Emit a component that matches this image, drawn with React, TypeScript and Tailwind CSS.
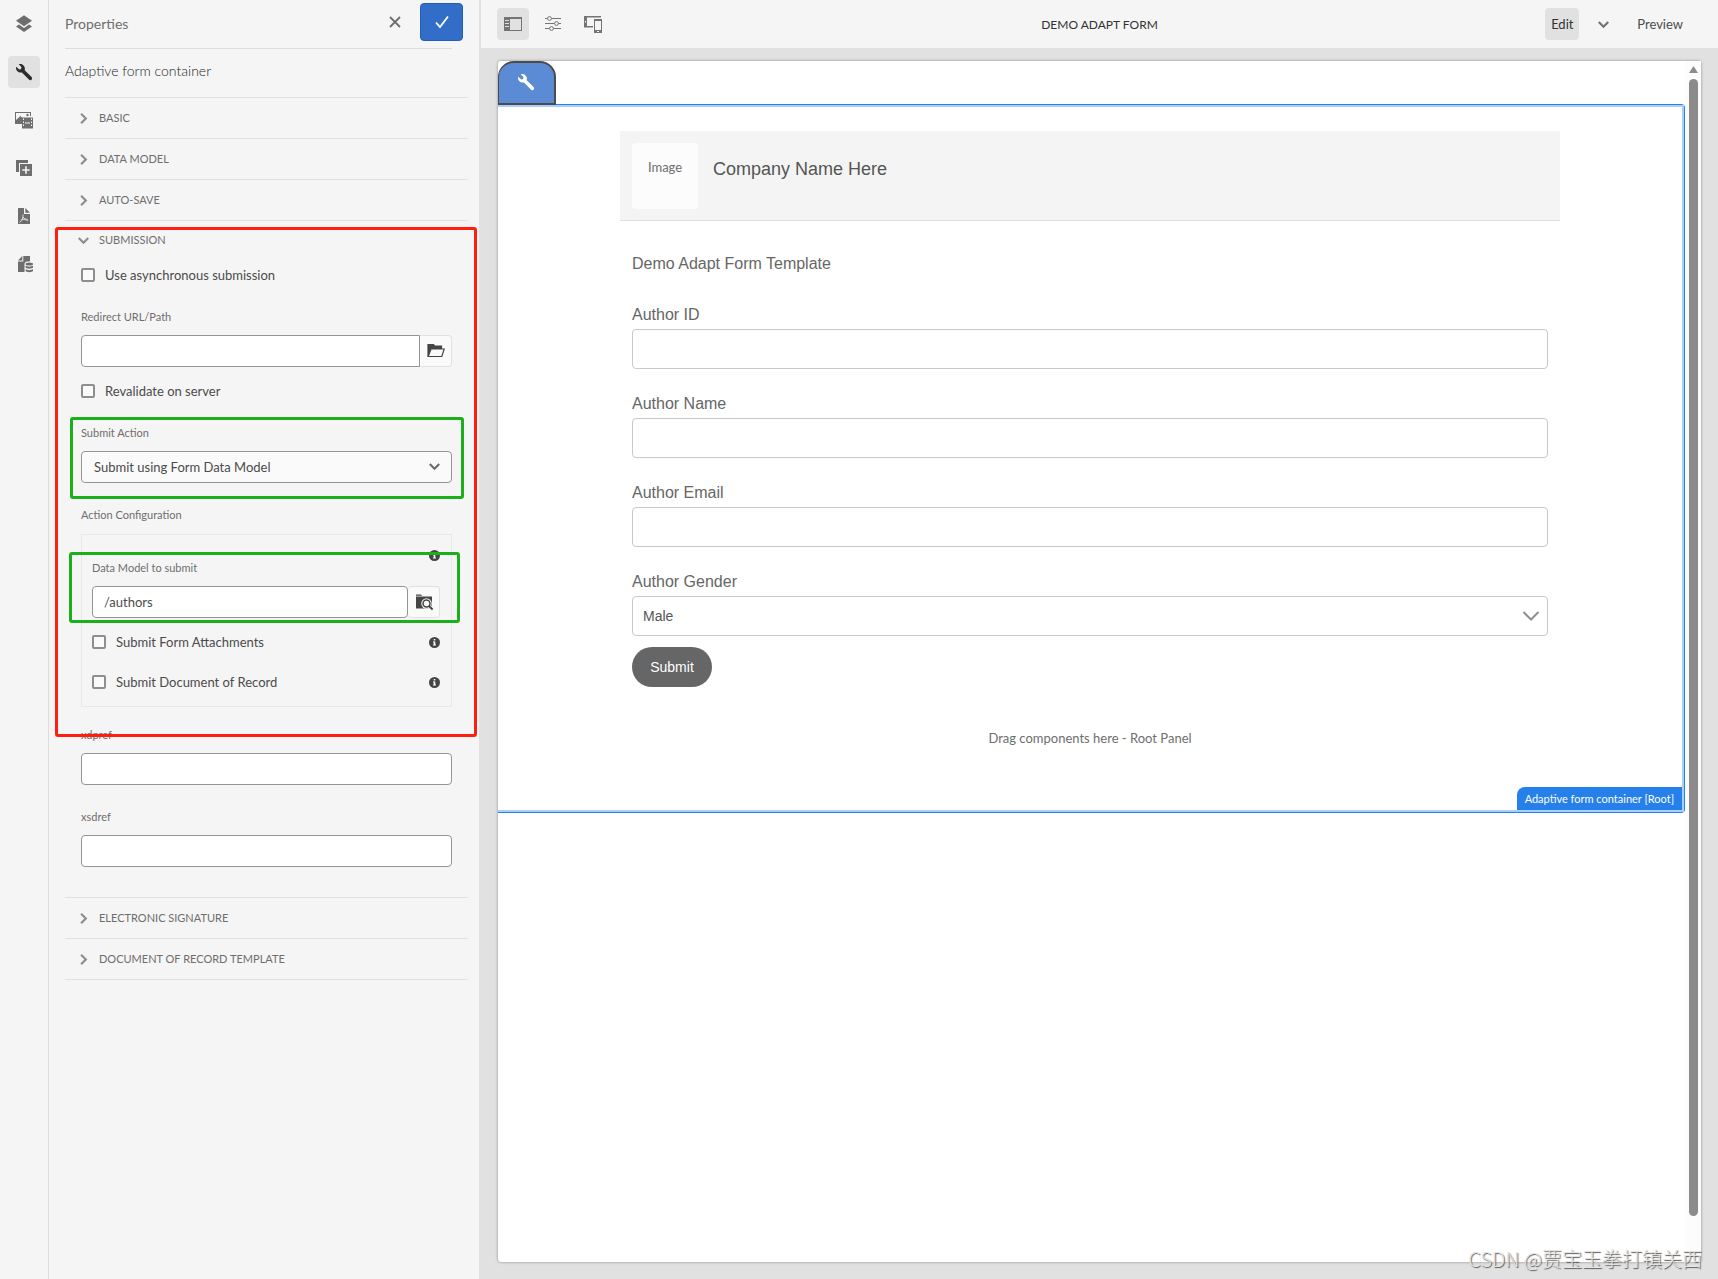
import { useState } from 'react'
import type { ReactNode } from 'react'

const annotation = 'pointer-events-none absolute z-10 rounded-[3px] border-3'
const panelInput = 'h-8 w-full rounded border border-[#959595] bg-white px-[11px] text-[13px] text-[#4b4b4b] outline-none'
const formInput = 'mt-0.5 block h-10 w-full rounded border border-[#c8c8c8] bg-white px-2.5 text-[14px] text-[#555] outline-none'

function Chevron({ className }: { className: string }) {
  return (
    <svg className={className} viewBox="0 0 10 10" fill="none" stroke="currentColor" strokeWidth="2">
      <path d="M.7 2.8 5 7.1l4.3-4.3" />
    </svg>
  )
}

function WrenchIcon() {
  return (
    <svg className="size-[18px]" viewBox="0 0 18 18" fill="currentColor">
      <path d="M16.6 14 9.7 7.3c.5-1.9.1-3.6-1.2-4.9C7.2 1.100 5.300.7 3.700 1.200l2.500 2.500c.3.3.3.7.2 1.100l-.3 1c-.1.2-.2.3-.4.4l-1 .2c-.4.1-.7 0-1-.3L1.200 3.700C.7 5.300 1.200 7 2.400 8.200c1.200 1.200 2.900 1.600 4.500 1.200l7 7.200c.7.8 1.900.9 2.600.1.800-.700.800-1.900.1-2.700z" />
    </svg>
  )
}

function LayersIcon() {
  return (
    <svg className="size-[18px]" viewBox="0 0 18 18" fill="currentColor">
      <path d="M9 .3 17 5.700 9 11.200 1 5.700z" />
      <path d="m4 9.500-3 2 8 5.600 8-5.600-3-2-5 3.400z" />
    </svg>
  )
}

function AssetsIcon() {
  return (
    <svg className="size-[18px]" viewBox="0 0 18 18" fill="currentColor">
      <path d="M0 1h16v4h-1V2H1v7l4.500-4L7 6.500V13H0z" />
      <circle cx="12.500" cy="4" r="1.200" />
      <path
        fillRule="evenodd"
        d="M7 6.500h11v11H7zm1 1v1.500h1V7.500zm0 3v1.500h1v-1.500zm0 3V15h1v-1.500zM16 7.500v1.500h1V7.500zm0 3v1.500h1v-1.500zm0 3V15h1v-1.500zM10 11.500v1h5v-1z"
      />
    </svg>
  )
}

function ComponentsIcon() {
  return (
    <svg className="size-[18px]" viewBox="0 0 18 18" fill="currentColor">
      <path d="M1 1h12v3H4v9H1z" />
      <path fillRule="evenodd" d="M5 5h12v12H5zm5.200 2.300v2.900H7.300v1.600h2.900v2.900h1.600v-2.900h2.900v-1.600h-2.900V7.300z" />
    </svg>
  )
}

function PdfIcon() {
  return (
    <svg className="size-[18px]" viewBox="0 0 18 18" fill="currentColor">
      <path d="M3 1h6v6h6v10H3z" />
      <path d="M10.300 1v4.700H15z" />
      <path
        d="M8 7.500c.4 3-1 6-3.500 8M8.200 10c.7 2 2.300 3.300 5 3.300M6 13.300c1.800-1.100 4-1.500 6.500-1"
        fill="none"
        stroke="#f5f5f5"
        strokeWidth=".8"
      />
    </svg>
  )
}

function DataIcon() {
  return (
    <svg className="size-[18px]" viewBox="0 0 18 18" fill="currentColor">
      <path d="M8.300 1H15v5.300c-3.200 0-5.500.8-5.500 2.500V17H3V6.500h5.300z" />
      <path d="M7.300 1v4.500H3z" />
      <ellipse cx="14.300" cy="9" rx="3.700" ry="1.500" />
      <path d="M10.600 10.800c1.600 1.100 5.800 1.100 7.400 0v1.800c-1 1.400-6.400 1.400-7.400 0zM10.600 14.300c1.600 1.100 5.800 1.100 7.400 0v1.700c-1 1.500-6.400 1.500-7.400 0z" />
    </svg>
  )
}

function SidePanelIcon() {
  return (
    <svg className="h-[14px] w-[18px]" viewBox="0 0 18 14" fill="currentColor">
      <path fillRule="evenodd" d="M0 0h18v14H0zm6 2v11h11V2zM1 3v1h4V3zm0 3v1h4V6zm0 3v1h4V9z" />
    </svg>
  )
}

function SlidersIcon() {
  return (
    <svg className="size-4" viewBox="0 0 16 16" fill="none" stroke="currentColor">
      <path d="M0 2.500h2.500M6.500 2.500H16M0 7.500h9.500M13.500 7.500H16M0 12.500h4.500M8.500 12.500H16" />
      <circle cx="4.500" cy="2.500" r="1.900" />
      <circle cx="11.500" cy="7.500" r="1.900" />
      <circle cx="6.500" cy="12.500" r="1.900" />
    </svg>
  )
}

function DevicesIcon() {
  return (
    <svg className="size-[18px]" viewBox="0 0 18 18" fill="currentColor">
      <path fillRule="evenodd" d="M0 1h17v1.500H3V11h6v1.500H0zm1 5v1.500h1V6z" />
      <path fillRule="evenodd" d="M10 4h8v14h-8zm1 2v9h6V6zm2 10v1h2v-1z" />
    </svg>
  )
}

function FolderOpenIcon() {
  return (
    <svg className="size-[18px]" viewBox="0 0 18 18" fill="none" stroke="currentColor" strokeWidth="1.200">
      <path d="M1 14.500v-12h5.500l1.200 1.500h6.800v3H4z" fill="currentColor" />
      <path d="M4 7h13.200l-2.400 7.500H1.200z" fill="#fafafa" />
    </svg>
  )
}

function FolderSearchIcon() {
  return (
    <svg className="size-[18px]" viewBox="0 0 18 18" fill="currentColor">
      <path d="M1 1.500h5l1.200 1.300H1zM1 3.500h16v12H1z" />
      <circle cx="11.500" cy="10.500" r="5.200" fill="#fafafa" />
      <path d="m14 13 4 4" stroke="#fafafa" strokeWidth="4" />
      <circle cx="11.500" cy="10.500" r="3.500" fill="#fafafa" stroke="currentColor" strokeWidth="1.500" />
      <path d="m14 13 3.600 3.600" stroke="currentColor" strokeWidth="2" />
    </svg>
  )
}

function InfoIcon() {
  return (
    <svg className="size-[11px] text-[#444]" viewBox="0 0 11 11">
      <circle cx="5.500" cy="5.500" r="5.500" fill="currentColor" />
      <path d="M4.700 2h1.600v1.600H4.700zM4 4.500h2.300v3H7v1H4v-1h.7v-2H4z" fill="#fff" />
    </svg>
  )
}

const railItems = [
  { name: 'Content tree', icon: <LayersIcon /> },
  { name: 'Properties', icon: <WrenchIcon /> },
  { name: 'Assets', icon: <AssetsIcon /> },
  { name: 'Components', icon: <ComponentsIcon /> },
  { name: 'Document', icon: <PdfIcon /> },
  { name: 'Data sources', icon: <DataIcon /> },
]

function Rail() {
  const [active, setActive] = useState('Properties')

  return (
    <nav className="flex w-[49px] shrink-0 flex-col items-center gap-4 border-r border-[#dcdcdc] pt-2">
      {railItems.map((item) => (
        <button
          key={item.name}
          aria-label={item.name}
          onClick={() => setActive(item.name)}
          className={`flex size-8 items-center justify-center rounded ${
            active === item.name ? 'bg-[#e1e1e1] text-[#2c2c2c]' : 'text-[#6e6e6e]'
          }`}
        >
          {item.icon}
        </button>
      ))}
    </nav>
  )
}

function SectionRow({ title }: { title: string }) {
  return (
    <button className="flex h-[41px] w-full items-center gap-2.5 border-b border-[#e0e0e0] pl-[13px] text-left text-[11px] text-[#6e6e6e]">
      <Chevron className="size-[11px] -rotate-90 text-[#8e8e8e]" />
      {title}
    </button>
  )
}

function CheckRow({ label, info }: { label: string; info?: boolean }) {
  return (
    <div className="flex h-8 items-center justify-between">
      <label className="flex items-center gap-2.5 text-[13px] text-[#4b4b4b]">
        <input type="checkbox" className="size-3.5 appearance-none rounded-[2px] border-2 border-[#8e8e8e] bg-[#fafafa] checked:bg-[#326ec8]" />
        <span className="pt-0.5">{label}</span>
      </label>
      {info && <InfoIcon />}
    </div>
  )
}

function FieldLabel({ id, children }: { id: string; children: ReactNode }) {
  return (
    <label htmlFor={id} className="mb-2 block text-[11px] leading-5 text-[#6e6e6e]">
      {children}
    </label>
  )
}

function Submission() {
  const [model, setModel] = useState('/authors')

  return (
    <section className="relative border-b border-[#e0e0e0] px-4 pb-[30px]">
      <div className={`${annotation} -left-2.5 -right-[9px] top-1.5 h-[510px] border-[#ff1e0f]`} />

      <button className="-ml-[3px] flex h-[38px] items-center gap-2.5 text-[11px] text-[#6e6e6e]">
        <Chevron className="size-[11px] text-[#8e8e8e]" />
        SUBMISSION
      </button>

      <CheckRow label="Use asynchronous submission" />

      <div className="mt-4">
        <FieldLabel id="redirect">Redirect URL/Path</FieldLabel>
        <div className="flex">
          <input id="redirect" className={`${panelInput} rounded-r-none`} />
          <button aria-label="Browse" className="flex h-8 w-8 shrink-0 items-center justify-center rounded-r border border-l-0 border-[#e1e1e1] bg-[#fafafa] text-[#444]">
            <FolderOpenIcon />
          </button>
        </div>
      </div>

      <div className="mt-2">
        <CheckRow label="Revalidate on server" />
      </div>

      <div className="relative mt-4">
        <div className={`${annotation} -left-[11px] -right-3 -bottom-4 -top-1.5 border-[#1baf1b]`} />
        <FieldLabel id="action">Submit Action</FieldLabel>
        <div className="relative">
          <select id="action" className="h-8 w-full appearance-none rounded border border-[#959595] bg-[#fafafa] px-3 pt-0.5 text-[13px] text-[#4b4b4b] outline-none">
            <option>Submit using Form Data Model</option>
          </select>
          <Chevron className="pointer-events-none absolute right-3 top-2.5 size-[11px] text-[#6e6e6e]" />
        </div>
      </div>

      <fieldset className="mt-[22px]">
        <legend className="text-[11px] leading-5 text-[#6e6e6e]">Action Configuration</legend>
        <div className="mt-[9px] border border-[#e8e8e8] pb-2 pl-2.5 pr-[11px] pt-[23px]">
          <div className="relative">
            <div className={`${annotation} -left-[23px] -right-5 -bottom-[5px] -top-1.5 border-[#1baf1b]`} />
            <div className="absolute -top-2 right-0">
              <InfoIcon />
            </div>
            <FieldLabel id="model">Data Model to submit</FieldLabel>
            <div className="flex">
              <input id="model" value={model} onChange={(e) => setModel(e.target.value)} className={panelInput} />
              <button aria-label="Search model" className="flex h-8 w-8 shrink-0 items-center justify-center rounded border border-l-0 border-[#e1e1e1] bg-[#fafafa] text-[#444]">
                <FolderSearchIcon />
              </button>
            </div>
          </div>
          <div className="mt-2 flex flex-col gap-2">
            <CheckRow label="Submit Form Attachments" info />
            <CheckRow label="Submit Document of Record" info />
          </div>
        </div>
      </fieldset>

      <div className="mt-[18px]">
        <FieldLabel id="xdpref">xdpref</FieldLabel>
        <input id="xdpref" className={panelInput} />
      </div>

      <div className="mt-[22px]">
        <FieldLabel id="xsdref">xsdref</FieldLabel>
        <input id="xsdref" className={panelInput} />
      </div>
    </section>
  )
}

function PropertiesPanel() {
  return (
    <aside className="w-[430px] shrink-0 pl-4 pr-[11px]">
      <header className="relative mr-4 flex h-[49px] items-center justify-between border-b border-[#dcdcdc] pb-0.5">
        <h2 className="text-[14px] text-[#6e6e6e]">Properties</h2>
        <div className="absolute -right-[11px] top-[3px] flex items-center gap-[18px]">
          <button aria-label="Cancel" className="text-[#6e6e6e]">
            <svg className="size-3.5" viewBox="0 0 14 14" stroke="currentColor" strokeWidth="1.800">
              <path d="m2 2 10 10M12 2 2 12" />
            </svg>
          </button>
          <button aria-label="Done" className="flex h-[38px] w-[43px] items-center justify-center rounded border border-[#1f5ebd] bg-[#326ec8] text-white">
            <svg className="size-3.5" viewBox="0 0 14 14" fill="none" stroke="currentColor" strokeWidth="1.800">
              <path d="m1 7.500 4 4.500 8-10.500" />
            </svg>
          </button>
        </div>
      </header>
      <h3 className="flex h-[49px] items-center border-b border-[#e0e0e0] pb-1.5 text-[14px] font-light text-[#1e1e1e]">
        Adaptive form container
      </h3>

      <SectionRow title="BASIC" />
      <SectionRow title="DATA MODEL" />
      <SectionRow title="AUTO-SAVE" />
      <Submission />
      <SectionRow title="ELECTRONIC SIGNATURE" />
      <SectionRow title="DOCUMENT OF RECORD TEMPLATE" />
    </aside>
  )
}

function Toolbar() {
  return (
    <header className="relative flex h-12 items-center justify-between bg-[#f5f5f5] pl-4 pr-[35px] text-[13px]">
      <div className="flex gap-2 text-[#747474]">
        <button aria-label="Toggle side panel" className="flex size-8 items-center justify-center rounded bg-[#e1e1e1]">
          <SidePanelIcon />
        </button>
        <button aria-label="Page information" className="flex size-8 items-center justify-center">
          <SlidersIcon />
        </button>
        <button aria-label="Emulator" className="flex size-8 items-center justify-center">
          <DevicesIcon />
        </button>
      </div>
      <h1 className="absolute left-1/2 -translate-x-1/2 pt-0.5 text-[12px] text-[#323232]">DEMO ADAPT FORM</h1>
      <div className="flex items-center text-[#4b4b4b]">
        <button className="h-8 w-[34px] rounded bg-[#e1e1e1] pt-0.5 text-[#323232]">Edit</button>
        <button aria-label="Choose mode" className="pl-[19px] pr-4 text-[#747474]">
          <Chevron className="size-[11px]" />
        </button>
        <button className="ml-3 pt-0.5">Preview</button>
      </div>
    </header>
  )
}

const textFields = ['Author ID', 'Author Name', 'Author Email']

function AuthorForm() {
  return (
    <form className="mx-auto w-[940px] max-w-full pt-6 font-['Liberation_Sans',Arial,sans-serif] text-[#666]" onSubmit={(e) => e.preventDefault()}>
      <div className="flex h-[90px] gap-[15px] border-b border-[#e0e0e0] bg-[#f4f4f4] px-3 pt-3">
        <div className="flex size-[66px] justify-center rounded bg-[#fcfcfc] pt-4 font-[Lato,sans-serif] text-[13px] leading-4 text-[#6e6e6e]">
          Image
        </div>
        <p className="pt-3 text-lg leading-7 text-[#555]">Company Name Here</p>
      </div>

      <div className="px-3">
        <p className="mb-[27px] mt-[31px] leading-6">Demo Adapt Form Template</p>

        <div className="flex flex-col gap-[23px]">
          {textFields.map((name) => (
            <label key={name} className="block leading-6">
              {name}
              <input className={formInput} />
            </label>
          ))}
          <label className="relative block leading-6">
            Author Gender
            <select className={`${formInput} appearance-none`}>
              <option>Male</option>
              <option>Female</option>
            </select>
            <svg className="pointer-events-none absolute bottom-3.5 right-2 h-3 w-[18px] text-[#8e8e8e]" viewBox="0 0 18 12" fill="none" stroke="currentColor" strokeWidth="2">
              <path d="m1.500 2 7.500 7.500L16.500 2" />
            </svg>
          </label>
        </div>

        <button className="mt-[11px] h-10 w-20 rounded-full bg-[#666] text-[14px] text-white">Submit</button>
      </div>
    </form>
  )
}

function Scrollbar() {
  return (
    <div className="ml-px flex w-[15px] shrink-0 flex-col items-center bg-[#fcfcfc] pt-[5px]">
      <svg className="h-[7px] w-[9px] text-[#8b8b8b]" viewBox="0 0 9 7" fill="currentColor">
        <path d="M4.500 0 9 7H0z" />
      </svg>
      <div className="mb-[46px] mt-1.5 w-[9px] flex-1 rounded-full bg-[#8b8b8b]" />
    </div>
  )
}

function Canvas() {
  return (
    <div className="mb-[17px] ml-[17px] mr-[17px] mt-[13px] flex flex-1 rounded-[3px] bg-white shadow-[0_0_3px_rgba(0,0,0,0.4)]">
      <div className="min-w-0 flex-1">
        <button aria-label="Configure" className="relative -mb-px flex h-11 w-[58px] items-center justify-center rounded-t-2xl border-2 border-l border-[#4b4b4b] bg-[#5a8bd4] pb-0.5 pr-0.5 text-white">
          <WrenchIcon />
        </button>
        <div className="rounded-r border-y border-r border-[#2680eb]">
          <div className="relative border-y-2 border-r-2 border-[#a8cffa] pb-[62px]">
            <AuthorForm />
            <p className="mt-[41px] text-center text-[13px] leading-5 text-[#6e6e6e]">Drag components here - Root Panel</p>
            <span className="absolute bottom-0 right-0 rounded-tl-lg bg-[#2680eb] px-2 text-[11px] leading-[23px] text-white">
              Adaptive form container [Root]
            </span>
          </div>
        </div>
      </div>
      <Scrollbar />
    </div>
  )
}

function App() {
  return (
    <div className="relative flex min-h-screen bg-[#f5f5f5] font-[Lato,'Noto_Sans_CJK_SC',sans-serif]">
      <Rail />
      <PropertiesPanel />
      <main className="flex min-w-0 flex-1 flex-col border-l-2 border-[#e1e1e1] bg-[#e1e1e1]">
        <Toolbar />
        <Canvas />
      </main>
      <p className="pointer-events-none absolute bottom-1.5 right-4 font-['Noto_Sans_CJK_SC',sans-serif] text-xl font-light leading-7 text-[#e4e4e4] [text-shadow:1px_1px_1px_#555]">
        CSDN @贾宝玉拳打镇关西
      </p>
    </div>
  )
}

export default App
